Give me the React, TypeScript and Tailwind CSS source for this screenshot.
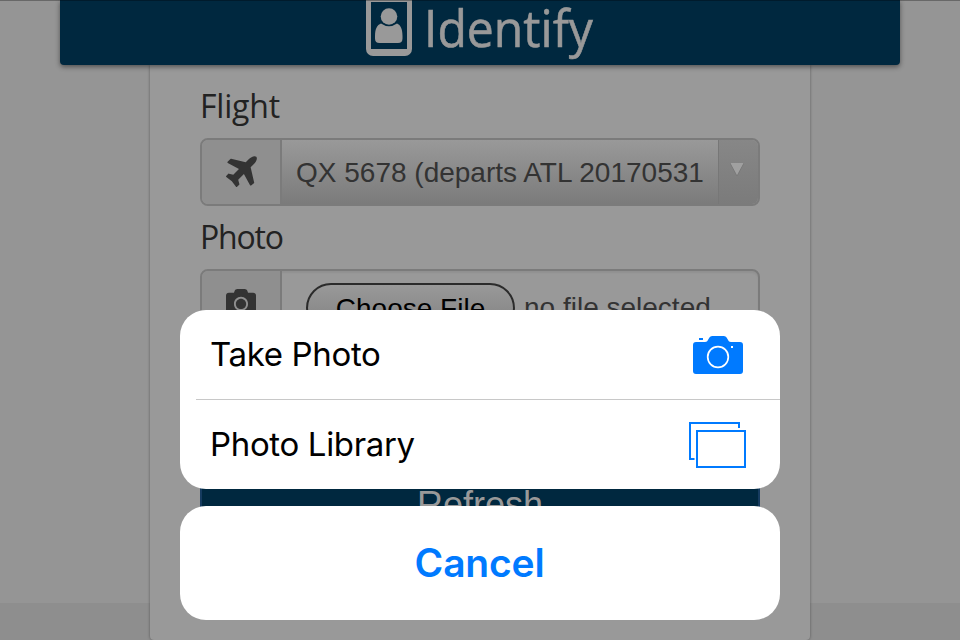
import { FaCamera } from "react-icons/fa";

function BadgeIcon() {
  return (
    <svg width="46" height="57" viewBox="0 0 46 57" className="block shrink-0">
      <path d="M2.500 0V49a4.500 4.500 0 0 0 4.500 4.500H39a4.500 4.500 0 0 0 4.500-4.500V0" fill="none" stroke="#999" strokeWidth="5" />
      <path d="M3 0H43V2H3zM3 49H43V54H3z" fill="#999" />
      <circle cx="23" cy="16.500" r="8.300" fill="#999" />
      <path d="M15 23.500C11 25 9 29 9 36v2.500q0 4.500 4.500 4.500h18.500q4.500 0 4.500-4.500V36c0-7-2-11-5.500-12.500Q23 29 15 23.500z" fill="#999" />
    </svg>
  );
}

function PlaneIcon() {
  return (
    <svg width="31" height="31" viewBox="192 128 1408 1408" className="block" fill="currentColor">
      <path d="M1568 160q44 52 12 148t-108 172l-161 161 160 696q5 19-12 33l-128 96q-7 6-19 6-4 0-7-1-15-3-21-16l-279-508-259 259 53 194q5 17-8 31l-96 96q-9 9-23 9h-2q-15-2-24-13l-189-252-252-189q-11-7-13-23-1-13 9-25l96-97q9-9 23-9 6 0 8 1l194 53 259-259-508-279q-14-8-17-24-2-16 9-27l128-128q14-13 30-8l665 159 160-160q76-76 172-108t148 12z" />
    </svg>
  );
}

function SheetCameraIcon() {
  return (
    <svg width="50" height="38" viewBox="0 0 50 38" className="block">
      <path d="M3 6H12c2 0 2.500-1 3.500-3S17.500 0 19.500 0h11c2 0 3 1 4 3s1.500 3 3.500 3h9a3 3 0 0 1 3 3v26a3 3 0 0 1-3 3H3a3 3 0 0 1-3-3V9a3 3 0 0 1 3-3z" fill="#007aff" />
      <path d="M6 2h4v2H6z" fill="#007aff" />
      <circle cx="25" cy="21" r="10.300" fill="none" stroke="#fff" strokeWidth="1.700" />
      <rect x="38" y="10" width="2" height="2" fill="#fff" />
    </svg>
  );
}

function LibraryIcon() {
  return (
    <svg width="57" height="46" viewBox="0 0 57 46" className="block" fill="none" stroke="#007aff" strokeWidth="2">
      <path d="M5.500 37H1V1H50V6" />
      <rect x="8" y="9" width="48" height="36" />
    </svg>
  );
}

export default function App() {
  return (
    <div className="relative h-[640px] w-[960px] overflow-hidden bg-[linear-gradient(#959595_603px,#8e8e8e_603px)] font-['Liberation_Sans',Arial,sans-serif]">
      <header className="relative z-10 mx-auto flex h-[65px] w-[840px] items-start rounded-b-[4px] bg-[#00283f] pl-[306px] shadow-[0_2px_5px_rgba(0,0,0,0.45)]">
        <BadgeIcon />
        <h1 className="ml-[12px] origin-left scale-x-[0.925] whitespace-nowrap font-['Open_Sans',sans-serif] text-[52px] leading-[54px] text-[#999] [-webkit-text-stroke:0.6px_#999]">Identify</h1>
      </header>
      <main className="mx-auto h-[575px] w-[660px] rounded-b-[4px] bg-[#999] px-[50px] pt-[17px] shadow-[0_0_3px_rgba(0,0,0,0.4)]">
        <label className="block h-[56px] font-['Open_Sans',sans-serif] text-[32px] leading-[48px] tracking-[-0.2px] text-[#222]">Flight</label>
        <div className="flex h-[68px] overflow-hidden rounded-[8px] border-2 border-[#7b7b7b]">
          <div className="flex w-[80px] shrink-0 justify-center border-r-2 border-[#7b7b7b] bg-[#8f8f8f] pt-[16px] text-[#333]">
            <PlaneIcon />
          </div>
          <div className="flex flex-1 items-center whitespace-nowrap bg-linear-to-b from-[#999] to-[#7b7b7b] pl-[14px] pt-[2px] text-[28px] text-[#333]">QX 5678 (departs ATL 20170531</div>
          <div className="flex w-[40px] shrink-0 justify-center border-l border-[#777] bg-linear-to-b from-[#878787] to-[#7b7b7b] pt-[23px]">
            <svg width="14" height="14" viewBox="0 0 14 14" className="-ml-[3px]">
              <path d="M0 0H14L7 13z" fill="#a0a0a0" />
              <path d="M0 0L7 13L14 0" fill="none" stroke="#707070" strokeWidth=".7" />
            </svg>
          </div>
        </div>
        <label className="block h-[63px] pt-[7px] font-['Open_Sans',sans-serif] text-[32px] leading-[48px] tracking-[-1.2px] text-[#222]">Photo</label>
        <div className="flex h-[68px] rounded-[8px] border-2 border-[#7b7b7b] shadow-[inset_0_2px_2px_rgba(0,0,0,0.06)]">
          <div className="flex w-[80px] shrink-0 justify-center rounded-l-[6px] border-r-2 border-[#7b7b7b] bg-[#8f8f8f] pt-[16px] text-[#333]">
            <FaCamera size={30} />
          </div>
          <div className="flex whitespace-nowrap pl-[24px] pt-[12px] text-[28px] leading-[48px] text-[#333]">
            <div className="h-[50px] w-[209px] rounded-[25px] border-2 border-[#2b2b2b] bg-linear-to-b from-[#999] to-[#808080] text-center text-black">Choose File</div>
            <span className="ml-[9px] leading-[50px]">no file selected</span>
          </div>
        </div>
        <div className="mt-[130px] h-[68px] border-2 border-[#163b5f] bg-[#00283f] pt-[16px] text-center text-[36px] leading-[40px] text-[#999]">Refresh</div>
      </main>
      <div className="absolute inset-x-0 top-0 z-20 h-px bg-black/30" />
      <section className="absolute left-[180px] top-[310px] z-30 flex w-[600px] flex-col gap-[17px] font-['Inter',sans-serif]">
        <div className="h-[179px] rounded-[26px] bg-white text-[33px] tracking-[-0.35px] text-black">
          <div className="flex h-[89px] items-center justify-between pl-[30px] pr-[37px]">
            <span>Take Photo</span>
            <SheetCameraIcon />
          </div>
          <div className="ml-[16px] h-px bg-[#c8c8c8]" />
          <div className="flex h-[89px] items-center justify-between pl-[30px] pr-[34px]">
            <span>Photo Library</span>
            <LibraryIcon />
          </div>
        </div>
        <button className="h-[114px] rounded-[26px] bg-white pr-[1px] text-[39px] font-semibold tracking-[-0.2px] text-[#007aff]">Cancel</button>
      </section>
    </div>
  );
}
